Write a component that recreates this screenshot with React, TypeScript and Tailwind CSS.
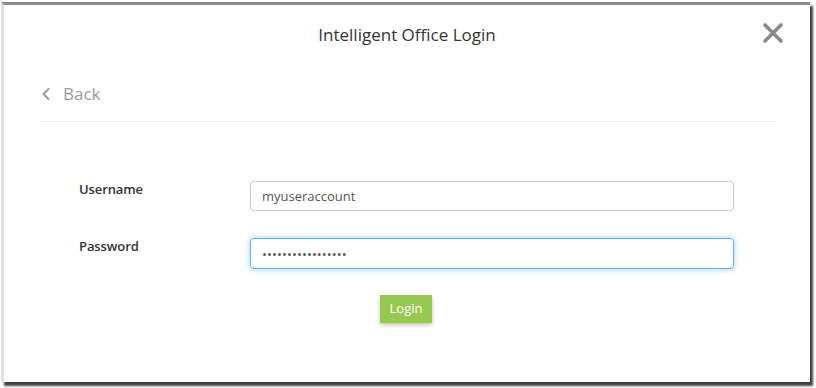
import { ChevronLeft } from "lucide-react";

export default function App() {
    return (
        <div className="w-[816px] h-[388px] bg-white pt-[2px] pl-[1px]" style={{ fontFamily: '"Open Sans", sans-serif' }}>
            <div className="relative w-[809px] h-[380px] bg-white border-t-[3px] border-t-[#8c8c8c] border-l-[3px] border-l-[#e0e0e0] shadow-[3px_4px_2px_rgba(0,0,0,0.75)]">
                {/* Header */}
                <div className="h-[60px] flex items-center justify-center">
                    <h1 className="text-[17px] text-[#333] font-normal">Intelligent Office Login</h1>
                </div>
                <button className="absolute top-[17px] right-[26px] text-[#8a8a8a]" aria-label="Close">
                    <svg width="22" height="22" viewBox="0 0 22 22">
                        <path d="M3 3 L19 19 M19 3 L3 19" stroke="currentColor" strokeWidth="3.6" strokeLinecap="round" />
                    </svg>
                </button>

                {/* Back + divider */}
                <div className="pl-[36px] pr-[33px]">
                    <div className="h-[57px] pt-[2px] flex items-center border-b border-[#ececec]">
                        <button className="flex items-center gap-[7px] text-[#999] text-[17px]">
                            <ChevronLeft className="w-[20px] h-[20px] ml-[-4px]" strokeWidth={2.2} />
                            <span>Back</span>
                        </button>
                    </div>
                </div>

                {/* Form */}
                <div className="pt-[59px] pl-[75px]">
                    <div className="flex items-start">
                        <label className="w-[171px] text-[13px] leading-[18px] font-semibold text-[#333] mt-[-1px] tracking-[-0.1px]">Username</label>
                        <input
                            className="w-[484px] h-[30px] px-[11px] text-[13px] text-[#555] border border-[#ccc] rounded-[4px] outline-none"
                            defaultValue="myuseraccount"
                        />
                    </div>
                    <div className="flex items-start mt-[27px]">
                        <label className="w-[171px] text-[13px] leading-[18px] font-semibold text-[#333] mt-[-1px] tracking-[-0.1px]">Password</label>
                        <input
                            type="password"
                            className="w-[484px] h-[31px] px-[11px] text-[13px] text-[#555] border border-[#66afe9] rounded-[4px] outline-none shadow-[0_0_6px_rgba(102,175,233,0.6)] tracking-[0.1px]"
                            defaultValue="myuserpassword123"
                        />
                    </div>
                </div>
                <div className="flex mt-[26px] pl-[376px]">
                    <button className="w-[52px] h-[28px] bg-[#97c94f] text-white text-[13px] shadow-[0_2px_4px_rgba(0,0,0,0.25)]">
                        Login
                    </button>
                </div>
            </div>
        </div>
    );
}
